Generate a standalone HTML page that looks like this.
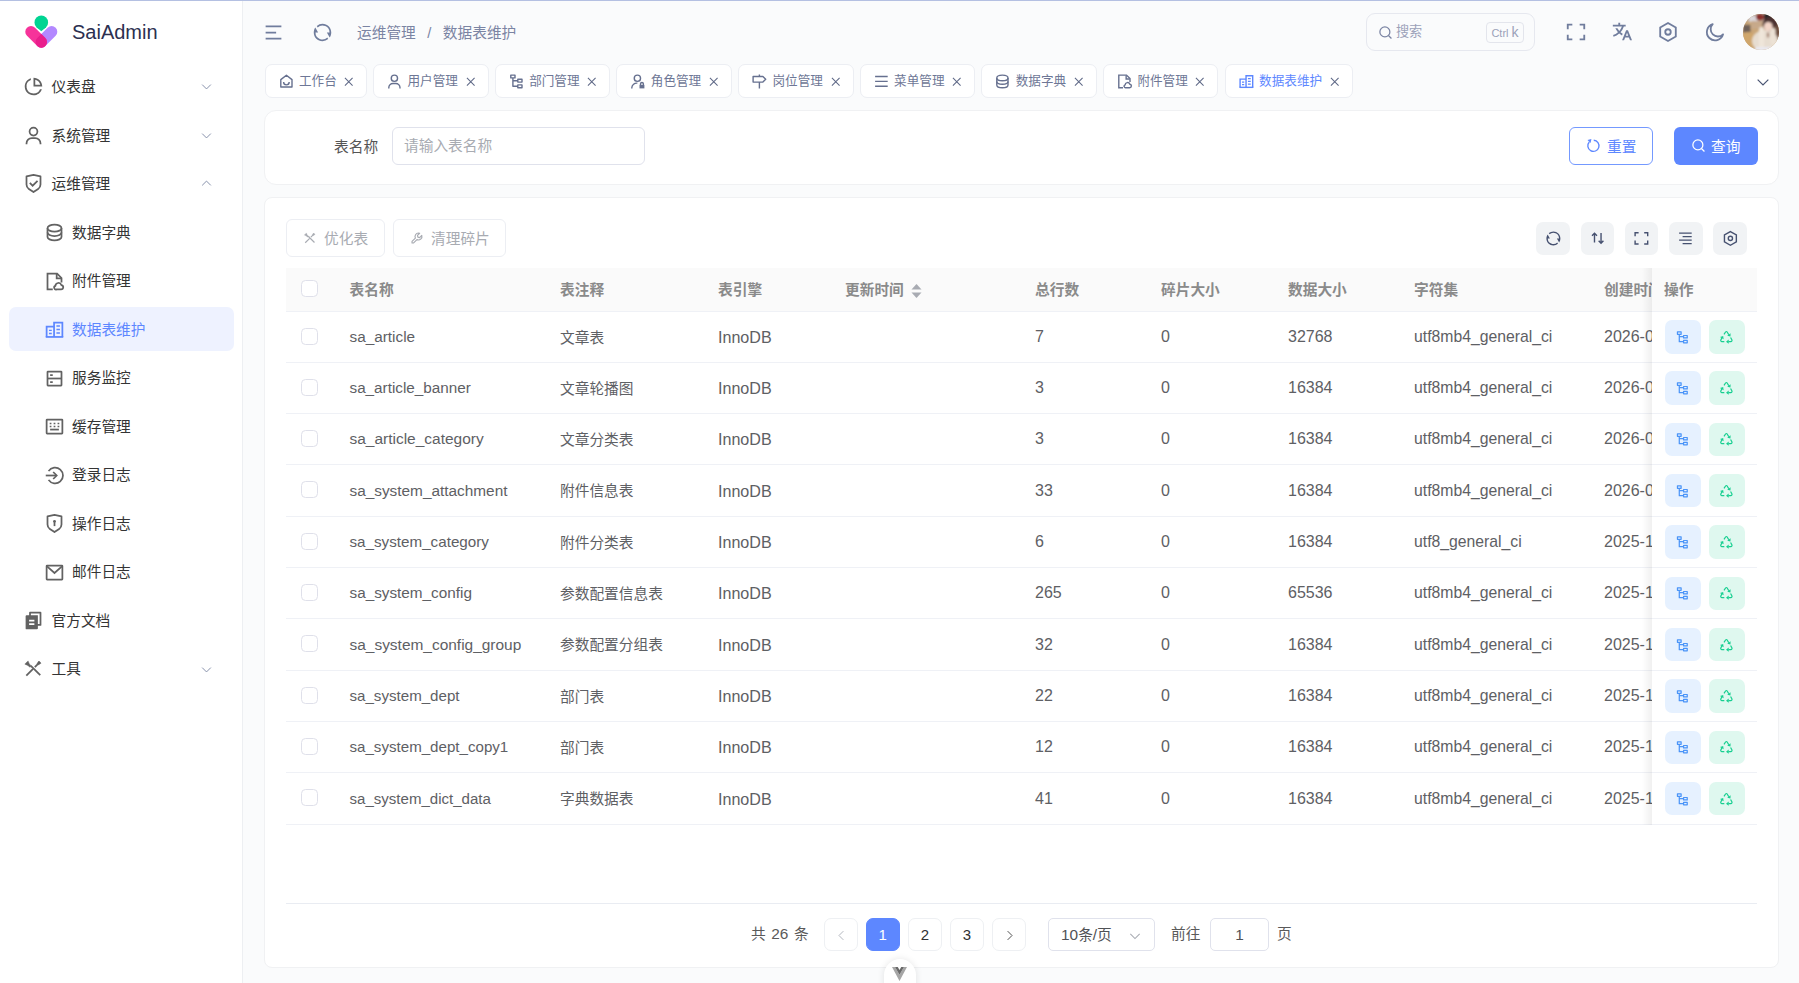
<!DOCTYPE html>
<html lang="zh-CN">
<head>
<meta charset="utf-8">
<title>SaiAdmin</title>
<style>
*{box-sizing:border-box;margin:0;padding:0}
html,body{width:1799px;height:983px;overflow:hidden;background:#fafbfc}
body{font-family:"Liberation Sans","Noto Sans CJK SC",sans-serif;font-size:14.7px;color:#3a3a3a;position:relative}
svg{display:block}
.abs{position:absolute}
#topline{position:absolute;left:0;top:0;width:1799px;height:1px;background:#b4c0e2;z-index:50}
/* sidebar */
#side{position:absolute;left:0;top:0;width:243px;height:983px;background:#fff;border-right:1px solid #edeff2}
#logo{position:absolute;left:24px;top:15px;width:34px;height:34px}
#brand{position:absolute;left:72px;top:19px;font-size:20px;line-height:26px;color:#2c3050}
.mi{position:absolute;left:8.5px;width:225.5px;height:44px;border-radius:7px;color:#343434;font-size:14.7px;line-height:44px}
.mi .ic{position:absolute;left:14px;top:11.7px;width:21px;height:21px;color:#626262}
.mi .tx{position:absolute;left:43px;top:.7px;white-space:nowrap}
.mi.sub .ic{left:35.2px;top:12.2px}
.mi.sub .tx{left:63.5px}
.mi .ar{position:absolute;left:191.5px;top:16px;width:13px;height:13px;color:#848ea9}
.mi.act{background:#eef2ff;color:#5d87ff}
.mi.act .ic{color:#5d87ff}
/* header */
.hic{position:absolute;color:#707d9d}
#crumb{position:absolute;left:357px;top:21.8px;font-size:14.7px;line-height:22px;color:#7a84a3;white-space:nowrap}
#crumb span{margin:0 11.5px}
#search{position:absolute;left:1366px;top:13px;width:169px;height:38px;border:1px solid #e6e8ef;border-radius:9px}
#search .ph{position:absolute;left:29px;top:8px;font-size:13.1px;line-height:20px;color:#9aa1b9}
#search .kbd{position:absolute;left:119px;top:8px;width:38px;height:21px;border:1px solid #e3e5ec;border-radius:4px;font-size:11px;line-height:19px;text-align:center;color:#9aa1b9;white-space:nowrap}
#search .kbd b{font-weight:normal;font-size:14px}
#avatar{position:absolute;left:1743.4px;top:14.4px;width:36px;height:36px}
/* tabs */
.tab{position:absolute;top:64px;height:34px;background:#fff;border:1px solid #eceef3;border-radius:7px;font-size:12.6px;line-height:32px;color:#6e7796;white-space:nowrap}
.tab .ic{position:absolute;left:12.2px;top:7.5px;width:16.8px;height:16.8px;color:#66708f}
.tab .tx{position:absolute;left:33.5px;top:0}
.tab .cl{position:absolute;right:11.5px;top:10.5px;width:11.5px;height:11.5px;color:#5f6987}
.tab.act{color:#5d87ff}
.tab.act .ic{color:#5d87ff}
/* cards */
.card{position:absolute;background:#fff;border:1px solid #f0f1f3;border-radius:12px}
.btn{position:absolute;height:38px;border-radius:6px;font-size:14.7px;line-height:36px;white-space:nowrap}
.tbtn{position:absolute;top:221.5px;width:33.5px;height:33.5px;background:#f1f3f5;border-radius:7px;color:#465170}
.tbtn svg{position:absolute;left:8.35px;top:8.35px;width:16.8px;height:16.8px}
/* table */
#thead{position:absolute;left:286px;top:268px;width:1471px;height:43.5px;background:#fafafa;border-bottom:1px solid #eff1f6}
.th{position:absolute;top:0;line-height:44.4px;font-weight:bold;color:#8a8a8a;font-size:14.7px;white-space:nowrap}
.row{position:absolute;left:286px;width:1471px;height:51.33px;border-bottom:1px solid #eff1f6}
.td{position:absolute;top:0;line-height:52px;color:#5e6064;font-size:14.7px;white-space:nowrap}
.td.l{font-size:15.4px;top:-.8px}
.td.l2{font-size:16.1px}
.td.l3{font-size:15.75px}
.td.l4{font-size:16px}
.lt{font-size:15.4px}
.cb{position:absolute;left:15px;width:17px;height:17px;border:1px solid #dfe0ea;border-radius:4.5px;background:#fff}
.ab{position:absolute;top:8.5px;width:36px;height:33.5px;border-radius:7px}
.ab svg{position:absolute;left:10.65px;top:9.6px;width:14.7px;height:14.7px}
.ab.b{left:1379px;background:#e6f1ff;color:#4a94f8}
.ab.g{left:1423px;background:#dff8ef;color:#17cf90}
#fix{position:absolute;left:1652px;top:268px;width:105px;height:557px;background:#fff}
#fixsh{position:absolute;left:1642px;top:268px;width:10px;height:557px;background:linear-gradient(to right,rgba(0,0,0,0),rgba(0,0,0,.06))}
/* pager */
.pg{position:absolute;top:917.5px;width:33.5px;height:33.5px;border:1px solid #eef0f3;border-radius:7px;font-size:15px;line-height:32.5px;text-align:center;color:#303133;background:#fff}
.pg.on{background:#5d87ff;border-color:#5d87ff;color:#fff}
</style>
</head>
<body>
<div id="side">
<svg id="logo" viewBox="24 15 34 34"><path d="M51.6 31.700L41.3 42" stroke="#b388ff" stroke-width="11.400" stroke-linecap="round" fill="none"/><path d="M31 31.700L41.3 42" stroke="#f6339a" stroke-width="11.400" stroke-linecap="round" fill="none"/><path d="M41.300 33.940L45.330 37.970A5.700 5.700 0 1 1 37.270 37.970z" fill="#e91e8c"/><circle cx="41.300" cy="22.400" r="6.800" fill="#00d492"/><path d="M36.500 27.200L41.300 31.300 46.100 27.200z" fill="#00d492"/></svg>
<div id="brand">SaiAdmin</div>
<div class="mi" style="top:64.30px"><svg class="ic" viewBox="0 0 24 24" fill="currentColor" ><path d="M9 2.458v2.124A8.003 8.003 0 0 0 12 20a8.003 8.003 0 0 0 7.419-5h2.123c-1.274 4.057-5.064 7-9.542 7-5.523 0-10-4.477-10-10 0-4.478 2.943-8.268 7-9.542zM12 2c5.523 0 10 4.477 10 10H12V2zm2 2.252V10h5.748A8.008 8.008 0 0 0 14 4.252z"/></svg><span class="tx">仪表盘</span><svg class="ar" viewBox="0 0 24 24" fill="none" stroke="currentColor" stroke-width="1.8" stroke-linecap="butt" stroke-linejoin="miter" ><path d="M4 8.500l8 8 8-8"/></svg></div>
<div class="mi" style="top:112.83px"><svg class="ic" viewBox="0 0 24 24" fill="none" stroke="currentColor" stroke-width="2" stroke-linecap="butt" stroke-linejoin="miter" ><circle cx="12" cy="7.5" r="4.5"/><path d="M4 22v-1a6 6 0 0 1 6-6h4a6 6 0 0 1 6 6v1"/></svg><span class="tx">系统管理</span><svg class="ar" viewBox="0 0 24 24" fill="none" stroke="currentColor" stroke-width="1.8" stroke-linecap="butt" stroke-linejoin="miter" ><path d="M4 8.500l8 8 8-8"/></svg></div>
<div class="mi" style="top:161.36px"><svg class="ic" viewBox="0 0 24 24" fill="none" stroke="currentColor" stroke-width="2" stroke-linecap="butt" stroke-linejoin="miter" ><path d="M12 2.1l8 1.8v9.3a6 6 0 0 1-2.7 5L12 21.8l-5.300-3.600a6 6 0 0 1-2.700-5V3.900z" stroke-linejoin="round"/><path d="M7.800 11.300l3.200 3.200 5.600-5.600"/></svg><span class="tx">运维管理</span><svg class="ar" viewBox="0 0 24 24" fill="none" stroke="currentColor" stroke-width="1.8" stroke-linecap="butt" stroke-linejoin="miter" ><path d="M4 15.500l8-8 8 8"/></svg></div>
<div class="mi sub" style="top:209.89px"><svg class="ic" viewBox="0 0 24 24" fill="none" stroke="currentColor" stroke-width="2" stroke-linecap="butt" stroke-linejoin="miter" ><ellipse cx="12" cy="7" rx="8" ry="4"/><path d="M4 7v10c0 2.200 3.600 4 8 4s8-1.800 8-4V7"/><path d="M4 12c0 2.200 3.600 4 8 4s8-1.800 8-4"/></svg><span class="tx">数据字典</span></div>
<div class="mi sub" style="top:258.42px"><svg class="ic" viewBox="0 0 24 24" fill="none" stroke="currentColor" stroke-width="2" stroke-linecap="butt" stroke-linejoin="miter" ><path d="M10 21H4V3h11l5 5v5"/><path d="M14.500 3.500V8.500H19.500"/><path d="M14.500 21h5a2.500 2.500 0 0 0 .300-4.980 3.500 3.500 0 0 0-6.800 1.000A2 2 0 0 0 14.500 21z" stroke-linejoin="round"/></svg><span class="tx">附件管理</span></div>
<div class="mi sub act" style="top:306.95px"><svg class="ic" viewBox="0 0 24 24" fill="none" stroke="currentColor" stroke-width="2" stroke-linecap="butt" stroke-linejoin="miter" ><path d="M11.500 20.500V4h9.500v16.500"/><path d="M3 20.500V8.800h8.500"/><path d="M2 20.500h20"/><path d="M14.200 8h4M14.200 12h4M14.200 16h4M5.700 13h3.200M5.700 16.700h3.200" stroke-width="1.700"/></svg><span class="tx">数据表维护</span></div>
<div class="mi sub" style="top:355.48px"><svg class="ic" viewBox="0 0 24 24" fill="none" stroke="currentColor" stroke-width="2" stroke-linecap="butt" stroke-linejoin="miter" ><rect x="4" y="4" width="16" height="16" rx=".5"/><path d="M4 12h16"/><path d="M7 8h3M7 16h3"/></svg><span class="tx">服务监控</span></div>
<div class="mi sub" style="top:404.01px"><svg class="ic" viewBox="0 0 24 24" fill="none" stroke="currentColor" stroke-width="2" stroke-linecap="butt" stroke-linejoin="miter" ><rect x="3" y="4" width="18" height="16" rx=".5"/><path d="M7 15.500h10"/><path d="M6.500 8.500h2M11 8.500h2M15.500 8.500h2M6.500 12h2M11 12h2M15.500 12h2" stroke-width="1.800"/></svg><span class="tx">缓存管理</span></div>
<div class="mi sub" style="top:452.54px"><svg class="ic" viewBox="0 0 24 24" fill="none" stroke="currentColor" stroke-width="2" stroke-linecap="butt" stroke-linejoin="miter" ><path d="M5.200 7A9 9 0 1 1 5.200 17"/><path d="M2 12h12"/><path d="M10.500 8l4 4-4 4"/></svg><span class="tx">登录日志</span></div>
<div class="mi sub" style="top:501.07px"><svg class="ic" viewBox="0 0 24 24" fill="none" stroke="currentColor" stroke-width="2" stroke-linecap="butt" stroke-linejoin="miter" ><path d="M12 2.100l8 1.800v9.300a6 6 0 0 1-2.700 5L12 21.800l-5.300-3.600a6 6 0 0 1-2.700-5V3.900z" stroke-linejoin="round"/><circle cx="12" cy="9.500" r="1.600" fill="currentColor" stroke="none"/><path d="M12 10v5"/></svg><span class="tx">操作日志</span></div>
<div class="mi sub" style="top:549.60px"><svg class="ic" viewBox="0 0 24 24" fill="none" stroke="currentColor" stroke-width="2" stroke-linecap="butt" stroke-linejoin="miter" ><rect x="3" y="4" width="18" height="16" rx=".5"/><path d="M3.500 5l8.500 7.600L20.500 5"/></svg><span class="tx">邮件日志</span></div>
<div class="mi" style="top:598.13px"><svg class="ic" viewBox="0 0 24 24" fill="currentColor" ><path d="M7 6V3a1 1 0 0 1 1-1h12a1 1 0 0 1 1 1v14a1 1 0 0 1-1 1h-3v3c0 .552-.450 1-1.007 1H4.007A1.001 1.001 0 0 1 3 21l.003-14c0-.552.450-1 1.007-1H7zm2 0h8v10h2V4H9v2zm-2 5v2h6v-2H7zm0 4v2h6v-2H7z"/></svg><span class="tx">官方文档</span></div>
<div class="mi" style="top:646.66px"><svg class="ic" viewBox="0 0 24 24" fill="none" stroke="currentColor" stroke-width="2" stroke-linecap="butt" stroke-linejoin="miter" ><path d="M3.800 20.200l7.700-7.700"/><path d="M13.500 10.500l6-6" /><path d="M18 3.500l2.500 2.500-2.700 1.800-1.600-1.600z" fill="currentColor" stroke-width=".6"/><path d="M9 9l10.700 10.700" /><path d="M3.300 5.800l2.500-2.500 1.500 3.500 2.200 2.200-1.700 1.700-2.200-2.200-3.500-1.500z" fill="currentColor" stroke-width=".5"/></svg><span class="tx">工具</span><svg class="ar" viewBox="0 0 24 24" fill="none" stroke="currentColor" stroke-width="1.8" stroke-linecap="butt" stroke-linejoin="miter" ><path d="M4 8.500l8 8 8-8"/></svg></div>
</div>
<svg class="hic" style="left:263px;top:22px;width:21px;height:21px" viewBox="0 0 24 24" fill="none" stroke="currentColor" stroke-width="2" stroke-linecap="butt" stroke-linejoin="miter" ><path d="M3 5h18M3 12h12M3 19h18"/></svg>
<svg class="hic" style="left:312px;top:22px;width:21px;height:21px" viewBox="0 0 24 24" fill="currentColor" ><path d="M5.463 4.433A9.961 9.961 0 0 1 12 2c5.523 0 10 4.477 10 10 0 2.136-.67 4.116-1.810 5.740L17 12h3A8 8 0 0 0 6.460 6.228l-.997-1.795zm13.074 15.134A9.961 9.961 0 0 1 12 22C6.477 22 2 17.523 2 12c0-2.136.67-4.116 1.810-5.740L7 12H4a8 8 0 0 0 13.540 5.772l.997 1.795z"/></svg>
<div id="crumb">运维管理<span>/</span>数据表维护</div>
<div id="search"><svg class="hic" style="left:11px;top:11px;width:15px;height:15px;color:#7a84a3" viewBox="0 0 24 24" fill="none" stroke="currentColor" stroke-width="2" stroke-linecap="butt" stroke-linejoin="miter" ><circle cx="11" cy="11" r="8"/><path d="M16.700 16.700l4.800 4.800"/></svg><span class="ph">搜索</span><span class="kbd">Ctrl <b>k</b></span></div>
<svg class="hic" style="left:1565px;top:21px;width:22px;height:22px" viewBox="0 0 24 24" fill="none" stroke="currentColor" stroke-width="2" stroke-linecap="butt" stroke-linejoin="miter" ><path d="M3 9V4h5M16 4h5v5M21 15v5h-5M8 20H3v-5"/></svg>
<svg class="hic" style="left:1611px;top:21px;width:22px;height:22px" viewBox="0 0 24 24" fill="currentColor" ><path d="M18.500 10l4.400 11h-2.155l-1.201-3h-4.090l-1.199 3h-2.154L16.500 10h2zM10 2v2h6v2h-1.968a18.222 18.222 0 0 1-3.620 6.301 14.864 14.864 0 0 0 2.336 1.707l-.751 1.878A17.015 17.015 0 0 1 9 13.725a16.676 16.676 0 0 1-6.201 3.548l-.536-1.929a14.700 14.700 0 0 0 5.327-3.042A18.078 18.078 0 0 1 4.767 8h2.240A16.032 16.032 0 0 0 9 10.877a16.165 16.165 0 0 0 2.910-4.876L2 6V4h6V2h2zm7.500 10.885L16.253 16h2.492L17.500 12.885z"/></svg>
<svg class="hic" style="left:1657px;top:21px;width:22px;height:22px" viewBox="0 0 24 24" fill="none" stroke="currentColor" stroke-width="2" stroke-linecap="butt" stroke-linejoin="miter" ><path d="M12 2.200l8.500 4.900v9.800L12 21.800l-8.500-4.900V7.100z"/><circle cx="12" cy="12" r="3"/></svg>
<svg class="hic" style="left:1704px;top:21px;width:22px;height:22px" viewBox="0 0 24 24" fill="none" stroke="currentColor" stroke-width="2" stroke-linecap="butt" stroke-linejoin="miter" ><path d="M9.500 3.500A9 9 0 1 0 20.800 14.500 7.500 7.500 0 0 1 9.500 3.500z" stroke-linejoin="round"/></svg>
<svg id="avatar" viewBox="0 0 36 36"><defs><filter id="avb" x="-20%" y="-20%" width="140%" height="140%"><feGaussianBlur stdDeviation="1.1"/></filter><clipPath id="avc"><circle cx="18" cy="18" r="18"/></clipPath></defs><g clip-path="url(#avc)"><rect width="36" height="36" fill="#c9a577"/><g filter="url(#avb)"><rect x="-2" y="-2" width="40" height="9" fill="#b9a99c"/><rect x="6" y="2" width="9" height="6" fill="#dcd8dc"/><ellipse cx="17" cy="3" rx="4" ry="3.500" fill="#8a2f2c"/><rect x="21" y="-2" width="17" height="8" fill="#23252b"/><rect x="0" y="11" width="7.500" height="7.500" fill="#6e6058"/><rect x="8" y="7" width="12" height="8" fill="#c7a98a"/><ellipse cx="5" cy="26" rx="8" ry="8" fill="#cfa66c"/><ellipse cx="27.500" cy="10" rx="8" ry="7.500" fill="#4b3230"/><rect x="30" y="12" width="8" height="16" fill="#6b4b3e"/><ellipse cx="22" cy="27" rx="13" ry="11" fill="#e7ddd0"/><ellipse cx="25.200" cy="12.500" rx="4.300" ry="4.600" fill="#f3d5c8"/><rect x="16" y="13" width="5" height="22" rx="2.500" fill="#efe6da"/><rect x="27.500" y="14" width="5" height="17" rx="2.500" fill="#ece2d5"/><ellipse cx="25" cy="21" rx="1.300" ry="3" fill="#a98878"/><rect x="12" y="33" width="18" height="4" fill="#e9e9f1"/></g></g></svg>
<div class="tab" style="left:264.5px;width:102.5px"><svg class="ic" viewBox="0 0 24 24" fill="none" stroke="currentColor" stroke-width="2" stroke-linecap="butt" stroke-linejoin="miter" ><path d="M4 20V9.500l8-6.300 8 6.300V20z" stroke-linejoin="round"/><path d="M8 13a4 4 0 0 0 8 0"/></svg><span class="tx">工作台</span><svg class="cl" viewBox="0 0 24 24" fill="none" stroke="currentColor" stroke-width="2.2" stroke-linecap="butt" stroke-linejoin="miter" ><path d="M4 4l16 16M20 4L4 20"/></svg></div>
<div class="tab" style="left:373.0px;width:115.6px"><svg class="ic" viewBox="0 0 24 24" fill="none" stroke="currentColor" stroke-width="2" stroke-linecap="butt" stroke-linejoin="miter" ><circle cx="12" cy="7.5" r="4.5"/><path d="M4 22v-1a6 6 0 0 1 6-6h4a6 6 0 0 1 6 6v1"/></svg><span class="tx">用户管理</span><svg class="cl" viewBox="0 0 24 24" fill="none" stroke="currentColor" stroke-width="2.2" stroke-linecap="butt" stroke-linejoin="miter" ><path d="M4 4l16 16M20 4L4 20"/></svg></div>
<div class="tab" style="left:494.65px;width:115.6px"><svg class="ic" viewBox="0 0 24 24" fill="currentColor" ><path d="M10 2a1 1 0 0 1 1 1v4a1 1 0 0 1-1 1H8v2h5V9a1 1 0 0 1 1-1h6a1 1 0 0 1 1 1v4a1 1 0 0 1-1 1h-6a1 1 0 0 1-1-1v-1H8v6h5v-1a1 1 0 0 1 1-1h6a1 1 0 0 1 1 1v4a1 1 0 0 1-1 1h-6a1 1 0 0 1-1-1v-1H7a1 1 0 0 1-1-1V8H4a1 1 0 0 1-1-1V3a1 1 0 0 1 1-1h6zm9 16h-4v2h4v-2zm0-8h-4v2h4v-2zM9 4H5v2h4V4z"/></svg><span class="tx">部门管理</span><svg class="cl" viewBox="0 0 24 24" fill="none" stroke="currentColor" stroke-width="2.2" stroke-linecap="butt" stroke-linejoin="miter" ><path d="M4 4l16 16M20 4L4 20"/></svg></div>
<div class="tab" style="left:616.3px;width:115.6px"><svg class="ic" viewBox="0 0 24 24" fill="none" stroke="currentColor" stroke-width="2" stroke-linecap="butt" stroke-linejoin="miter" ><circle cx="12" cy="7.500" r="4.500"/><path d="M4 22v-1a7 7 0 0 1 8-6.500"/><rect x="15" y="17" width="7" height="5" fill="currentColor" stroke="none"/><path d="M16.500 17v-1.500a2 2 0 0 1 4 0V17"/></svg><span class="tx">角色管理</span><svg class="cl" viewBox="0 0 24 24" fill="none" stroke="currentColor" stroke-width="2.2" stroke-linecap="butt" stroke-linejoin="miter" ><path d="M4 4l16 16M20 4L4 20"/></svg></div>
<div class="tab" style="left:737.95px;width:115.6px"><svg class="ic" viewBox="0 0 24 24" fill="none" stroke="currentColor" stroke-width="2" stroke-linecap="butt" stroke-linejoin="miter" ><path d="M3 5h14l4 4-4 4H3z" stroke-linejoin="round"/><path d="M12 2v3M12 13v9"/></svg><span class="tx">岗位管理</span><svg class="cl" viewBox="0 0 24 24" fill="none" stroke="currentColor" stroke-width="2.2" stroke-linecap="butt" stroke-linejoin="miter" ><path d="M4 4l16 16M20 4L4 20"/></svg></div>
<div class="tab" style="left:859.6px;width:115.6px"><svg class="ic" viewBox="0 0 24 24" fill="none" stroke="currentColor" stroke-width="2" stroke-linecap="butt" stroke-linejoin="miter" ><path d="M3 5h18M3 12h18M3 19h18"/></svg><span class="tx">菜单管理</span><svg class="cl" viewBox="0 0 24 24" fill="none" stroke="currentColor" stroke-width="2.2" stroke-linecap="butt" stroke-linejoin="miter" ><path d="M4 4l16 16M20 4L4 20"/></svg></div>
<div class="tab" style="left:981.25px;width:115.6px"><svg class="ic" viewBox="0 0 24 24" fill="none" stroke="currentColor" stroke-width="2" stroke-linecap="butt" stroke-linejoin="miter" ><ellipse cx="12" cy="7" rx="8" ry="4"/><path d="M4 7v10c0 2.200 3.600 4 8 4s8-1.800 8-4V7"/><path d="M4 12c0 2.200 3.600 4 8 4s8-1.800 8-4"/></svg><span class="tx">数据字典</span><svg class="cl" viewBox="0 0 24 24" fill="none" stroke="currentColor" stroke-width="2.2" stroke-linecap="butt" stroke-linejoin="miter" ><path d="M4 4l16 16M20 4L4 20"/></svg></div>
<div class="tab" style="left:1102.9px;width:115.6px"><svg class="ic" viewBox="0 0 24 24" fill="none" stroke="currentColor" stroke-width="2" stroke-linecap="butt" stroke-linejoin="miter" ><path d="M10 21H4V3h11l5 5v5"/><path d="M14.500 3.500V8.500H19.500"/><path d="M14.500 21h5a2.500 2.500 0 0 0 .300-4.980 3.500 3.500 0 0 0-6.800 1.000A2 2 0 0 0 14.500 21z" stroke-linejoin="round"/></svg><span class="tx">附件管理</span><svg class="cl" viewBox="0 0 24 24" fill="none" stroke="currentColor" stroke-width="2.2" stroke-linecap="butt" stroke-linejoin="miter" ><path d="M4 4l16 16M20 4L4 20"/></svg></div>
<div class="tab act" style="left:1224.6px;width:128.8px"><svg class="ic" viewBox="0 0 24 24" fill="none" stroke="currentColor" stroke-width="2" stroke-linecap="butt" stroke-linejoin="miter" ><path d="M11.500 20.500V4h9.500v16.500"/><path d="M3 20.500V8.800h8.500"/><path d="M2 20.500h20"/><path d="M14.200 8h4M14.200 12h4M14.200 16h4M5.700 13h3.200M5.700 16.700h3.200" stroke-width="1.700"/></svg><span class="tx">数据表维护</span><svg class="cl" viewBox="0 0 24 24" fill="none" stroke="currentColor" stroke-width="2.2" stroke-linecap="butt" stroke-linejoin="miter" ><path d="M4 4l16 16M20 4L4 20"/></svg></div>
<div class="tab" style="left:1746px;width:33px"><svg class="ic" style="left:8px;top:8.5px;width:16px;height:16px;color:#4a5573" viewBox="0 0 24 24" fill="none" stroke="currentColor" stroke-width="1.8" stroke-linecap="butt" stroke-linejoin="miter" ><path d="M4 8.500l8 8 8-8"/></svg></div>
<div class="card" style="left:264px;top:110px;width:1515px;height:75px"></div>
<div class="abs" style="left:334px;top:136px;font-size:14.7px;line-height:22px;color:#555">表名称</div>
<div class="abs" style="left:392px;top:127px;width:253px;height:38px;border:1px solid #e0e2ec;border-radius:6px;background:#fff"><span class="abs" style="left:11px;top:7px;line-height:22px;color:#a8abb2;font-size:14.7px;white-space:nowrap">请输入表名称</span></div>
<div class="btn" style="left:1569px;top:127px;width:84px;border:1px solid #7499ff;color:#5d87ff;background:#fff"><svg class="ic" style="position:absolute;left:14.5px;top:9px;width:16.8px;height:16.8px" viewBox="0 0 24 24" fill="none" stroke="currentColor" stroke-width="1.9" stroke-linecap="butt" stroke-linejoin="miter" ><path d="M12.500 4.600A8 8 0 1 1 6.100 7.200"/><path d="M3.600 4.400l5.600-1.400-1.300 5.600z" fill="currentColor" stroke="none"/></svg><span class="abs" style="left:37px;top:.7px">重置</span></div>
<div class="btn" style="left:1674px;top:127px;width:84px;background:#5d87ff;color:#fff;line-height:38px"><svg class="ic" style="position:absolute;left:17px;top:11px;width:15px;height:15px" viewBox="0 0 24 24" fill="none" stroke="currentColor" stroke-width="2" stroke-linecap="butt" stroke-linejoin="miter" ><circle cx="11" cy="11" r="8"/><path d="M16.700 16.700l4.800 4.800"/></svg><span class="abs" style="left:37px;top:.7px">查询</span></div>
<div class="card" style="left:264px;top:197px;width:1515px;height:771px;border-radius:8px"></div>
<div class="btn" style="left:286px;top:219px;width:99px;border:1px solid #eceef3;color:#a8abb2;background:#fff"><svg class="ic" style="position:absolute;left:16px;top:11px;width:14px;height:14px" viewBox="0 0 24 24" fill="none" stroke="currentColor" stroke-width="2" stroke-linecap="butt" stroke-linejoin="miter" ><path d="M3.800 20.200l7.700-7.700"/><path d="M13.500 10.500l6-6" /><path d="M18 3.500l2.500 2.500-2.700 1.800-1.600-1.600z" fill="currentColor" stroke-width=".6"/><path d="M9 9l10.700 10.700" /><path d="M3.300 5.800l2.500-2.500 1.500 3.500 2.200 2.200-1.700 1.700-2.200-2.200-3.500-1.500z" fill="currentColor" stroke-width=".5"/></svg><span class="abs" style="left:37px;top:.7px">优化表</span></div>
<div class="btn" style="left:393px;top:219px;width:113px;border:1px solid #eceef3;color:#a8abb2;background:#fff"><svg class="ic" style="position:absolute;left:16px;top:11px;width:14px;height:14px" viewBox="0 0 24 24" fill="none" stroke="currentColor" stroke-width="2" stroke-linecap="butt" stroke-linejoin="miter" ><path d="M14.500 3.500a6 6 0 0 0-5.300 8.600L3.500 17.800v2.700h2.700l5.700-5.700a6 6 0 0 0 8.300-7.200l-3.700 3.700-3-.700-.700-3 3.700-3.700a6 6 0 0 0-2-.400z" stroke-linejoin="round"/></svg><span class="abs" style="left:37px;top:.7px">清理碎片</span></div>
<div class="tbtn" style="left:1536.3px"><svg viewBox="0 0 24 24" fill="currentColor" ><path d="M5.463 4.433A9.961 9.961 0 0 1 12 2c5.523 0 10 4.477 10 10 0 2.136-.67 4.116-1.810 5.740L17 12h3A8 8 0 0 0 6.460 6.228l-.997-1.795zm13.074 15.134A9.961 9.961 0 0 1 12 22C6.477 22 2 17.523 2 12c0-2.136.67-4.116 1.810-5.740L7 12H4a8 8 0 0 0 13.540 5.772l.997 1.795z"/></svg></div>
<div class="tbtn" style="left:1580.5px"><svg viewBox="0 0 24 24" fill="none" stroke="currentColor" stroke-width="2" stroke-linecap="butt" stroke-linejoin="miter" ><path d="M7.850 18V5M4.300 8.300l3.550-3.700 3.550 3.700"/><path d="M17.200 4.300v14.200M13.800 15.300l3.400 3.600 3.400-3.600"/></svg></div>
<div class="tbtn" style="left:1624.8px"><svg viewBox="0 0 24 24" fill="none" stroke="currentColor" stroke-width="2" stroke-linecap="butt" stroke-linejoin="miter" ><path d="M3 9V4h5M16 4h5v5M21 15v5h-5M8 20H3v-5"/></svg></div>
<div class="tbtn" style="left:1669.0px"><svg viewBox="0 0 24 24" fill="none" stroke="currentColor" stroke-width="2" stroke-linecap="butt" stroke-linejoin="miter" ><path d="M3 4.500h18M8 9.500h13M3 14.500h18M8 19.500h13"/></svg></div>
<div class="tbtn" style="left:1713.3px"><svg viewBox="0 0 24 24" fill="none" stroke="currentColor" stroke-width="2" stroke-linecap="butt" stroke-linejoin="miter" ><path d="M12 2.200l8.500 4.900v9.800L12 21.800l-8.500-4.900V7.100z"/><circle cx="12" cy="12" r="3"/></svg></div>
<div id="thead"><div class="cb" style="top:12px"></div><div class="th" style="left:63.5px">表名称</div><div class="th" style="left:274px">表注释</div><div class="th" style="left:432px">表引擎</div><div class="th" style="left:559px">更新时间</div><div class="th" style="left:749px">总行数</div><div class="th" style="left:875px">碎片大小</div><div class="th" style="left:1002px">数据大小</div><div class="th" style="left:1128px">字符集</div><div class="th" style="left:1318px">创建时间</div><svg class="abs" style="left:624.500px;top:14.500px;width:11px;height:16px" viewBox="0 0 11 16"><path d="M5.500 1L10.500 6.500H.5z" fill="#a8abb2"/><path d="M5.500 15L10.500 9.500H.5z" fill="#a8abb2"/></svg></div>
<div class="row" style="top:311.50px"><div class="cb" style="top:16px"></div><div class="td l" style="left:63.5px;font-size:15.33px">sa_article</div><div class="td " style="left:274px">文章表</div><div class="td l l2" style="left:432px">InnoDB</div><div class="td l l4" style="left:749px">7</div><div class="td l l4" style="left:875px">0</div><div class="td l l4" style="left:1002px">32768</div><div class="td l l3" style="left:1128px">utf8mb4_general_ci</div><div class="td l l4" style="left:1318px">2026-01-09 09:00:00</div></div>
<div class="row" style="top:362.83px"><div class="cb" style="top:16px"></div><div class="td l" style="left:63.5px;font-size:15.27px">sa_article_banner</div><div class="td " style="left:274px">文章轮播图</div><div class="td l l2" style="left:432px">InnoDB</div><div class="td l l4" style="left:749px">3</div><div class="td l l4" style="left:875px">0</div><div class="td l l4" style="left:1002px">16384</div><div class="td l l3" style="left:1128px">utf8mb4_general_ci</div><div class="td l l4" style="left:1318px">2026-01-09 09:00:00</div></div>
<div class="row" style="top:414.16px"><div class="cb" style="top:16px"></div><div class="td l" style="left:63.5px;font-size:15.48px">sa_article_category</div><div class="td " style="left:274px">文章分类表</div><div class="td l l2" style="left:432px">InnoDB</div><div class="td l l4" style="left:749px">3</div><div class="td l l4" style="left:875px">0</div><div class="td l l4" style="left:1002px">16384</div><div class="td l l3" style="left:1128px">utf8mb4_general_ci</div><div class="td l l4" style="left:1318px">2026-01-09 09:00:00</div></div>
<div class="row" style="top:465.49px"><div class="cb" style="top:16px"></div><div class="td l" style="left:63.5px;font-size:15.37px">sa_system_attachment</div><div class="td " style="left:274px">附件信息表</div><div class="td l l2" style="left:432px">InnoDB</div><div class="td l l4" style="left:749px">33</div><div class="td l l4" style="left:875px">0</div><div class="td l l4" style="left:1002px">16384</div><div class="td l l3" style="left:1128px">utf8mb4_general_ci</div><div class="td l l4" style="left:1318px">2026-01-09 09:00:00</div></div>
<div class="row" style="top:516.82px"><div class="cb" style="top:16px"></div><div class="td l" style="left:63.5px;font-size:15.21px">sa_system_category</div><div class="td " style="left:274px">附件分类表</div><div class="td l l2" style="left:432px">InnoDB</div><div class="td l l4" style="left:749px">6</div><div class="td l l4" style="left:875px">0</div><div class="td l l4" style="left:1002px">16384</div><div class="td l l3" style="left:1128px">utf8_general_ci</div><div class="td l l4" style="left:1318px">2025-12-09 09:00:00</div></div>
<div class="row" style="top:568.15px"><div class="cb" style="top:16px"></div><div class="td l" style="left:63.5px;font-size:15.31px">sa_system_config</div><div class="td " style="left:274px">参数配置信息表</div><div class="td l l2" style="left:432px">InnoDB</div><div class="td l l4" style="left:749px">265</div><div class="td l l4" style="left:875px">0</div><div class="td l l4" style="left:1002px">65536</div><div class="td l l3" style="left:1128px">utf8mb4_general_ci</div><div class="td l l4" style="left:1318px">2025-12-09 09:00:00</div></div>
<div class="row" style="top:619.48px"><div class="cb" style="top:16px"></div><div class="td l" style="left:63.5px;font-size:15.46px">sa_system_config_group</div><div class="td " style="left:274px">参数配置分组表</div><div class="td l l2" style="left:432px">InnoDB</div><div class="td l l4" style="left:749px">32</div><div class="td l l4" style="left:875px">0</div><div class="td l l4" style="left:1002px">16384</div><div class="td l l3" style="left:1128px">utf8mb4_general_ci</div><div class="td l l4" style="left:1318px">2025-12-09 09:00:00</div></div>
<div class="row" style="top:670.81px"><div class="cb" style="top:16px"></div><div class="td l" style="left:63.5px;font-size:15.12px">sa_system_dept</div><div class="td " style="left:274px">部门表</div><div class="td l l2" style="left:432px">InnoDB</div><div class="td l l4" style="left:749px">22</div><div class="td l l4" style="left:875px">0</div><div class="td l l4" style="left:1002px">16384</div><div class="td l l3" style="left:1128px">utf8mb4_general_ci</div><div class="td l l4" style="left:1318px">2025-12-09 09:00:00</div></div>
<div class="row" style="top:722.14px"><div class="cb" style="top:16px"></div><div class="td l" style="left:63.5px;font-size:15.11px">sa_system_dept_copy1</div><div class="td " style="left:274px">部门表</div><div class="td l l2" style="left:432px">InnoDB</div><div class="td l l4" style="left:749px">12</div><div class="td l l4" style="left:875px">0</div><div class="td l l4" style="left:1002px">16384</div><div class="td l l3" style="left:1128px">utf8mb4_general_ci</div><div class="td l l4" style="left:1318px">2025-12-09 09:00:00</div></div>
<div class="row" style="top:773.47px"><div class="cb" style="top:16px"></div><div class="td l" style="left:63.5px;font-size:15.05px">sa_system_dict_data</div><div class="td " style="left:274px">字典数据表</div><div class="td l l2" style="left:432px">InnoDB</div><div class="td l l4" style="left:749px">41</div><div class="td l l4" style="left:875px">0</div><div class="td l l4" style="left:1002px">16384</div><div class="td l l3" style="left:1128px">utf8mb4_general_ci</div><div class="td l l4" style="left:1318px">2025-12-09 09:00:00</div></div>
<div id="fixsh"></div>
<div id="fix"><div class="abs" style="left:0;top:0;width:105px;height:43.5px;background:#fafafa;border-bottom:1px solid #eff1f6"><div class="th" style="left:12px">操作</div></div><div class="abs" style="left:0;top:43.50px;width:105px;height:51.33px;border-bottom:1px solid #eff1f6"><div class="ab b" style="left:12.5px"><svg viewBox="0 0 24 24" fill="currentColor" ><path d="M10 2a1 1 0 0 1 1 1v4a1 1 0 0 1-1 1H8v2h5V9a1 1 0 0 1 1-1h6a1 1 0 0 1 1 1v4a1 1 0 0 1-1 1h-6a1 1 0 0 1-1-1v-1H8v6h5v-1a1 1 0 0 1 1-1h6a1 1 0 0 1 1 1v4a1 1 0 0 1-1 1h-6a1 1 0 0 1-1-1v-1H7a1 1 0 0 1-1-1V8H4a1 1 0 0 1-1-1V3a1 1 0 0 1 1-1h6zm9 16h-4v2h4v-2zm0-8h-4v2h4v-2zM9 4H5v2h4V4z"/></svg></div><div class="ab g" style="left:56.700px"><svg viewBox="0 0 24 24" fill="none" stroke="currentColor" stroke-width="2" stroke-linecap="butt" stroke-linejoin="miter" ><path d="M8.200 7.200l2.500-4a1.500 1.500 0 0 1 2.600 0l2.700 4.600"/><path d="M13.400 9.400l5.300 1.300.200-5.400z" fill="currentColor" stroke="none"/><path d="M18.900 12.300l2.100 3.700a2 2 0 0 1-1.700 3H15.500"/><path d="M15.800 15.600l-4.300 3.400 4.300 3.400z" fill="currentColor" stroke="none"/><path d="M8.700 19H4.800a2 2 0 0 1-1.700-3l1.800-3.100"/><path d="M1.600 11.500l5.200-1.800.800 5.400z" fill="currentColor" stroke="none"/></svg></div></div><div class="abs" style="left:0;top:94.83px;width:105px;height:51.33px;border-bottom:1px solid #eff1f6"><div class="ab b" style="left:12.5px"><svg viewBox="0 0 24 24" fill="currentColor" ><path d="M10 2a1 1 0 0 1 1 1v4a1 1 0 0 1-1 1H8v2h5V9a1 1 0 0 1 1-1h6a1 1 0 0 1 1 1v4a1 1 0 0 1-1 1h-6a1 1 0 0 1-1-1v-1H8v6h5v-1a1 1 0 0 1 1-1h6a1 1 0 0 1 1 1v4a1 1 0 0 1-1 1h-6a1 1 0 0 1-1-1v-1H7a1 1 0 0 1-1-1V8H4a1 1 0 0 1-1-1V3a1 1 0 0 1 1-1h6zm9 16h-4v2h4v-2zm0-8h-4v2h4v-2zM9 4H5v2h4V4z"/></svg></div><div class="ab g" style="left:56.700px"><svg viewBox="0 0 24 24" fill="none" stroke="currentColor" stroke-width="2" stroke-linecap="butt" stroke-linejoin="miter" ><path d="M8.200 7.200l2.500-4a1.500 1.500 0 0 1 2.600 0l2.700 4.600"/><path d="M13.400 9.400l5.300 1.300.200-5.400z" fill="currentColor" stroke="none"/><path d="M18.900 12.300l2.100 3.700a2 2 0 0 1-1.700 3H15.500"/><path d="M15.800 15.600l-4.300 3.400 4.300 3.400z" fill="currentColor" stroke="none"/><path d="M8.700 19H4.800a2 2 0 0 1-1.700-3l1.800-3.100"/><path d="M1.600 11.500l5.200-1.800.800 5.400z" fill="currentColor" stroke="none"/></svg></div></div><div class="abs" style="left:0;top:146.16px;width:105px;height:51.33px;border-bottom:1px solid #eff1f6"><div class="ab b" style="left:12.5px"><svg viewBox="0 0 24 24" fill="currentColor" ><path d="M10 2a1 1 0 0 1 1 1v4a1 1 0 0 1-1 1H8v2h5V9a1 1 0 0 1 1-1h6a1 1 0 0 1 1 1v4a1 1 0 0 1-1 1h-6a1 1 0 0 1-1-1v-1H8v6h5v-1a1 1 0 0 1 1-1h6a1 1 0 0 1 1 1v4a1 1 0 0 1-1 1h-6a1 1 0 0 1-1-1v-1H7a1 1 0 0 1-1-1V8H4a1 1 0 0 1-1-1V3a1 1 0 0 1 1-1h6zm9 16h-4v2h4v-2zm0-8h-4v2h4v-2zM9 4H5v2h4V4z"/></svg></div><div class="ab g" style="left:56.700px"><svg viewBox="0 0 24 24" fill="none" stroke="currentColor" stroke-width="2" stroke-linecap="butt" stroke-linejoin="miter" ><path d="M8.200 7.200l2.500-4a1.500 1.500 0 0 1 2.600 0l2.700 4.600"/><path d="M13.400 9.400l5.300 1.300.200-5.400z" fill="currentColor" stroke="none"/><path d="M18.900 12.300l2.100 3.700a2 2 0 0 1-1.700 3H15.500"/><path d="M15.800 15.600l-4.300 3.400 4.300 3.400z" fill="currentColor" stroke="none"/><path d="M8.700 19H4.800a2 2 0 0 1-1.700-3l1.800-3.100"/><path d="M1.600 11.500l5.200-1.800.800 5.400z" fill="currentColor" stroke="none"/></svg></div></div><div class="abs" style="left:0;top:197.49px;width:105px;height:51.33px;border-bottom:1px solid #eff1f6"><div class="ab b" style="left:12.5px"><svg viewBox="0 0 24 24" fill="currentColor" ><path d="M10 2a1 1 0 0 1 1 1v4a1 1 0 0 1-1 1H8v2h5V9a1 1 0 0 1 1-1h6a1 1 0 0 1 1 1v4a1 1 0 0 1-1 1h-6a1 1 0 0 1-1-1v-1H8v6h5v-1a1 1 0 0 1 1-1h6a1 1 0 0 1 1 1v4a1 1 0 0 1-1 1h-6a1 1 0 0 1-1-1v-1H7a1 1 0 0 1-1-1V8H4a1 1 0 0 1-1-1V3a1 1 0 0 1 1-1h6zm9 16h-4v2h4v-2zm0-8h-4v2h4v-2zM9 4H5v2h4V4z"/></svg></div><div class="ab g" style="left:56.700px"><svg viewBox="0 0 24 24" fill="none" stroke="currentColor" stroke-width="2" stroke-linecap="butt" stroke-linejoin="miter" ><path d="M8.200 7.200l2.500-4a1.500 1.500 0 0 1 2.600 0l2.700 4.600"/><path d="M13.400 9.400l5.300 1.300.200-5.400z" fill="currentColor" stroke="none"/><path d="M18.900 12.300l2.100 3.700a2 2 0 0 1-1.700 3H15.500"/><path d="M15.800 15.600l-4.300 3.400 4.300 3.400z" fill="currentColor" stroke="none"/><path d="M8.700 19H4.800a2 2 0 0 1-1.700-3l1.800-3.100"/><path d="M1.600 11.500l5.200-1.800.800 5.400z" fill="currentColor" stroke="none"/></svg></div></div><div class="abs" style="left:0;top:248.82px;width:105px;height:51.33px;border-bottom:1px solid #eff1f6"><div class="ab b" style="left:12.5px"><svg viewBox="0 0 24 24" fill="currentColor" ><path d="M10 2a1 1 0 0 1 1 1v4a1 1 0 0 1-1 1H8v2h5V9a1 1 0 0 1 1-1h6a1 1 0 0 1 1 1v4a1 1 0 0 1-1 1h-6a1 1 0 0 1-1-1v-1H8v6h5v-1a1 1 0 0 1 1-1h6a1 1 0 0 1 1 1v4a1 1 0 0 1-1 1h-6a1 1 0 0 1-1-1v-1H7a1 1 0 0 1-1-1V8H4a1 1 0 0 1-1-1V3a1 1 0 0 1 1-1h6zm9 16h-4v2h4v-2zm0-8h-4v2h4v-2zM9 4H5v2h4V4z"/></svg></div><div class="ab g" style="left:56.700px"><svg viewBox="0 0 24 24" fill="none" stroke="currentColor" stroke-width="2" stroke-linecap="butt" stroke-linejoin="miter" ><path d="M8.200 7.200l2.500-4a1.500 1.500 0 0 1 2.600 0l2.700 4.600"/><path d="M13.400 9.400l5.300 1.300.200-5.400z" fill="currentColor" stroke="none"/><path d="M18.900 12.300l2.100 3.700a2 2 0 0 1-1.700 3H15.500"/><path d="M15.800 15.600l-4.300 3.400 4.300 3.400z" fill="currentColor" stroke="none"/><path d="M8.700 19H4.800a2 2 0 0 1-1.700-3l1.800-3.100"/><path d="M1.600 11.500l5.200-1.800.800 5.400z" fill="currentColor" stroke="none"/></svg></div></div><div class="abs" style="left:0;top:300.15px;width:105px;height:51.33px;border-bottom:1px solid #eff1f6"><div class="ab b" style="left:12.5px"><svg viewBox="0 0 24 24" fill="currentColor" ><path d="M10 2a1 1 0 0 1 1 1v4a1 1 0 0 1-1 1H8v2h5V9a1 1 0 0 1 1-1h6a1 1 0 0 1 1 1v4a1 1 0 0 1-1 1h-6a1 1 0 0 1-1-1v-1H8v6h5v-1a1 1 0 0 1 1-1h6a1 1 0 0 1 1 1v4a1 1 0 0 1-1 1h-6a1 1 0 0 1-1-1v-1H7a1 1 0 0 1-1-1V8H4a1 1 0 0 1-1-1V3a1 1 0 0 1 1-1h6zm9 16h-4v2h4v-2zm0-8h-4v2h4v-2zM9 4H5v2h4V4z"/></svg></div><div class="ab g" style="left:56.700px"><svg viewBox="0 0 24 24" fill="none" stroke="currentColor" stroke-width="2" stroke-linecap="butt" stroke-linejoin="miter" ><path d="M8.200 7.200l2.500-4a1.500 1.500 0 0 1 2.600 0l2.700 4.600"/><path d="M13.400 9.400l5.300 1.300.200-5.400z" fill="currentColor" stroke="none"/><path d="M18.900 12.300l2.100 3.700a2 2 0 0 1-1.700 3H15.500"/><path d="M15.800 15.600l-4.300 3.400 4.300 3.400z" fill="currentColor" stroke="none"/><path d="M8.700 19H4.800a2 2 0 0 1-1.700-3l1.800-3.100"/><path d="M1.600 11.500l5.200-1.800.800 5.400z" fill="currentColor" stroke="none"/></svg></div></div><div class="abs" style="left:0;top:351.48px;width:105px;height:51.33px;border-bottom:1px solid #eff1f6"><div class="ab b" style="left:12.5px"><svg viewBox="0 0 24 24" fill="currentColor" ><path d="M10 2a1 1 0 0 1 1 1v4a1 1 0 0 1-1 1H8v2h5V9a1 1 0 0 1 1-1h6a1 1 0 0 1 1 1v4a1 1 0 0 1-1 1h-6a1 1 0 0 1-1-1v-1H8v6h5v-1a1 1 0 0 1 1-1h6a1 1 0 0 1 1 1v4a1 1 0 0 1-1 1h-6a1 1 0 0 1-1-1v-1H7a1 1 0 0 1-1-1V8H4a1 1 0 0 1-1-1V3a1 1 0 0 1 1-1h6zm9 16h-4v2h4v-2zm0-8h-4v2h4v-2zM9 4H5v2h4V4z"/></svg></div><div class="ab g" style="left:56.700px"><svg viewBox="0 0 24 24" fill="none" stroke="currentColor" stroke-width="2" stroke-linecap="butt" stroke-linejoin="miter" ><path d="M8.200 7.200l2.500-4a1.500 1.500 0 0 1 2.600 0l2.700 4.600"/><path d="M13.400 9.400l5.300 1.300.200-5.400z" fill="currentColor" stroke="none"/><path d="M18.900 12.300l2.100 3.700a2 2 0 0 1-1.700 3H15.500"/><path d="M15.800 15.600l-4.300 3.400 4.300 3.400z" fill="currentColor" stroke="none"/><path d="M8.700 19H4.800a2 2 0 0 1-1.700-3l1.800-3.100"/><path d="M1.600 11.500l5.200-1.800.800 5.400z" fill="currentColor" stroke="none"/></svg></div></div><div class="abs" style="left:0;top:402.81px;width:105px;height:51.33px;border-bottom:1px solid #eff1f6"><div class="ab b" style="left:12.5px"><svg viewBox="0 0 24 24" fill="currentColor" ><path d="M10 2a1 1 0 0 1 1 1v4a1 1 0 0 1-1 1H8v2h5V9a1 1 0 0 1 1-1h6a1 1 0 0 1 1 1v4a1 1 0 0 1-1 1h-6a1 1 0 0 1-1-1v-1H8v6h5v-1a1 1 0 0 1 1-1h6a1 1 0 0 1 1 1v4a1 1 0 0 1-1 1h-6a1 1 0 0 1-1-1v-1H7a1 1 0 0 1-1-1V8H4a1 1 0 0 1-1-1V3a1 1 0 0 1 1-1h6zm9 16h-4v2h4v-2zm0-8h-4v2h4v-2zM9 4H5v2h4V4z"/></svg></div><div class="ab g" style="left:56.700px"><svg viewBox="0 0 24 24" fill="none" stroke="currentColor" stroke-width="2" stroke-linecap="butt" stroke-linejoin="miter" ><path d="M8.200 7.200l2.500-4a1.500 1.500 0 0 1 2.600 0l2.700 4.600"/><path d="M13.400 9.400l5.300 1.300.200-5.400z" fill="currentColor" stroke="none"/><path d="M18.900 12.300l2.100 3.700a2 2 0 0 1-1.700 3H15.500"/><path d="M15.800 15.600l-4.300 3.400 4.300 3.400z" fill="currentColor" stroke="none"/><path d="M8.700 19H4.800a2 2 0 0 1-1.700-3l1.800-3.100"/><path d="M1.600 11.500l5.200-1.800.800 5.400z" fill="currentColor" stroke="none"/></svg></div></div><div class="abs" style="left:0;top:454.14px;width:105px;height:51.33px;border-bottom:1px solid #eff1f6"><div class="ab b" style="left:12.5px"><svg viewBox="0 0 24 24" fill="currentColor" ><path d="M10 2a1 1 0 0 1 1 1v4a1 1 0 0 1-1 1H8v2h5V9a1 1 0 0 1 1-1h6a1 1 0 0 1 1 1v4a1 1 0 0 1-1 1h-6a1 1 0 0 1-1-1v-1H8v6h5v-1a1 1 0 0 1 1-1h6a1 1 0 0 1 1 1v4a1 1 0 0 1-1 1h-6a1 1 0 0 1-1-1v-1H7a1 1 0 0 1-1-1V8H4a1 1 0 0 1-1-1V3a1 1 0 0 1 1-1h6zm9 16h-4v2h4v-2zm0-8h-4v2h4v-2zM9 4H5v2h4V4z"/></svg></div><div class="ab g" style="left:56.700px"><svg viewBox="0 0 24 24" fill="none" stroke="currentColor" stroke-width="2" stroke-linecap="butt" stroke-linejoin="miter" ><path d="M8.200 7.200l2.500-4a1.500 1.500 0 0 1 2.600 0l2.700 4.600"/><path d="M13.400 9.400l5.300 1.300.200-5.400z" fill="currentColor" stroke="none"/><path d="M18.900 12.300l2.100 3.700a2 2 0 0 1-1.700 3H15.500"/><path d="M15.800 15.600l-4.300 3.400 4.300 3.400z" fill="currentColor" stroke="none"/><path d="M8.700 19H4.800a2 2 0 0 1-1.700-3l1.800-3.100"/><path d="M1.600 11.500l5.200-1.800.800 5.400z" fill="currentColor" stroke="none"/></svg></div></div><div class="abs" style="left:0;top:505.47px;width:105px;height:51.33px;border-bottom:1px solid #eff1f6"><div class="ab b" style="left:12.5px"><svg viewBox="0 0 24 24" fill="currentColor" ><path d="M10 2a1 1 0 0 1 1 1v4a1 1 0 0 1-1 1H8v2h5V9a1 1 0 0 1 1-1h6a1 1 0 0 1 1 1v4a1 1 0 0 1-1 1h-6a1 1 0 0 1-1-1v-1H8v6h5v-1a1 1 0 0 1 1-1h6a1 1 0 0 1 1 1v4a1 1 0 0 1-1 1h-6a1 1 0 0 1-1-1v-1H7a1 1 0 0 1-1-1V8H4a1 1 0 0 1-1-1V3a1 1 0 0 1 1-1h6zm9 16h-4v2h4v-2zm0-8h-4v2h4v-2zM9 4H5v2h4V4z"/></svg></div><div class="ab g" style="left:56.700px"><svg viewBox="0 0 24 24" fill="none" stroke="currentColor" stroke-width="2" stroke-linecap="butt" stroke-linejoin="miter" ><path d="M8.200 7.200l2.500-4a1.500 1.500 0 0 1 2.600 0l2.700 4.600"/><path d="M13.400 9.400l5.300 1.300.200-5.400z" fill="currentColor" stroke="none"/><path d="M18.900 12.300l2.100 3.700a2 2 0 0 1-1.700 3H15.500"/><path d="M15.800 15.600l-4.300 3.400 4.300 3.400z" fill="currentColor" stroke="none"/><path d="M8.700 19H4.800a2 2 0 0 1-1.700-3l1.800-3.100"/><path d="M1.600 11.500l5.200-1.800.800 5.400z" fill="currentColor" stroke="none"/></svg></div></div></div>
<div class="abs" style="left:286px;top:903px;width:1471px;height:1px;background:#e9ecf2"></div>
<div class="abs" style="left:751px;top:923px;line-height:22px;font-size:14.7px;color:#5a5a5a;white-space:nowrap;word-spacing:1.5px">共 <span class="lt">26</span> 条</div>
<div class="pg" style="left:824.2px"><svg class="ic" style="position:absolute;left:8.5px;top:9px;width:15px;height:15px;color:#b4b8c0" viewBox="0 0 24 24" fill="none" stroke="currentColor" stroke-width="1.6" stroke-linecap="butt" stroke-linejoin="miter" ><path d="M15 5l-7 7 7 7"/></svg></div>
<div class="pg on" style="left:866px">1</div>
<div class="pg" style="left:908.1px">2</div>
<div class="pg" style="left:950.2px">3</div>
<div class="pg" style="left:992.4px"><svg class="ic" style="position:absolute;left:9px;top:9px;width:15px;height:15px;color:#505050" viewBox="0 0 24 24" fill="none" stroke="currentColor" stroke-width="1.6" stroke-linecap="butt" stroke-linejoin="miter" ><path d="M9 5l7 7-7 7"/></svg></div>
<div class="abs" style="left:1048px;top:918px;width:107px;height:33px;border:1px solid #e0e2ec;border-radius:5px;background:#fff"><span class="abs" style="left:12px;top:5px;line-height:22px;font-size:14.7px;color:#505256;white-space:nowrap"><span class="lt">10</span>条<span class="lt">/</span>页</span><svg class="ic" style="position:absolute;left:79px;top:9.5px;width:14px;height:14px;color:#a8abb2" viewBox="0 0 24 24" fill="none" stroke="currentColor" stroke-width="1.8" stroke-linecap="butt" stroke-linejoin="miter" ><path d="M4 8.500l8 8 8-8"/></svg></div>
<div class="abs" style="left:1171px;top:923px;line-height:22px;font-size:14.7px;color:#5a5a5a">前往</div>
<div class="abs" style="left:1210px;top:918px;width:59px;height:33px;border:1px solid #e0e2ec;border-radius:5px;background:#fff;text-align:center;line-height:31px;font-size:15.4px;color:#505256">1</div>
<div class="abs" style="left:1277px;top:923px;line-height:22px;font-size:14.7px;color:#5a5a5a">页</div>
<div class="abs" style="left:884px;top:958.5px;width:32px;height:40px;border-radius:16px;background:#fff;box-shadow:0 0 7px rgba(0,0,0,.10)"><svg class="abs" style="left:8px;top:8.600px;width:15px;height:14px" viewBox="0 0 15 14"><path d="M0 0H3L7.500 7.800 12 0H15L7.500 14z" fill="#a6a6a6"/><path d="M3 0H5.800L7.500 2.900 9.200 0H12L7.500 7.800z" fill="#6a6a6a"/></svg></div>
<div id="topline"></div>
</body>
</html>
